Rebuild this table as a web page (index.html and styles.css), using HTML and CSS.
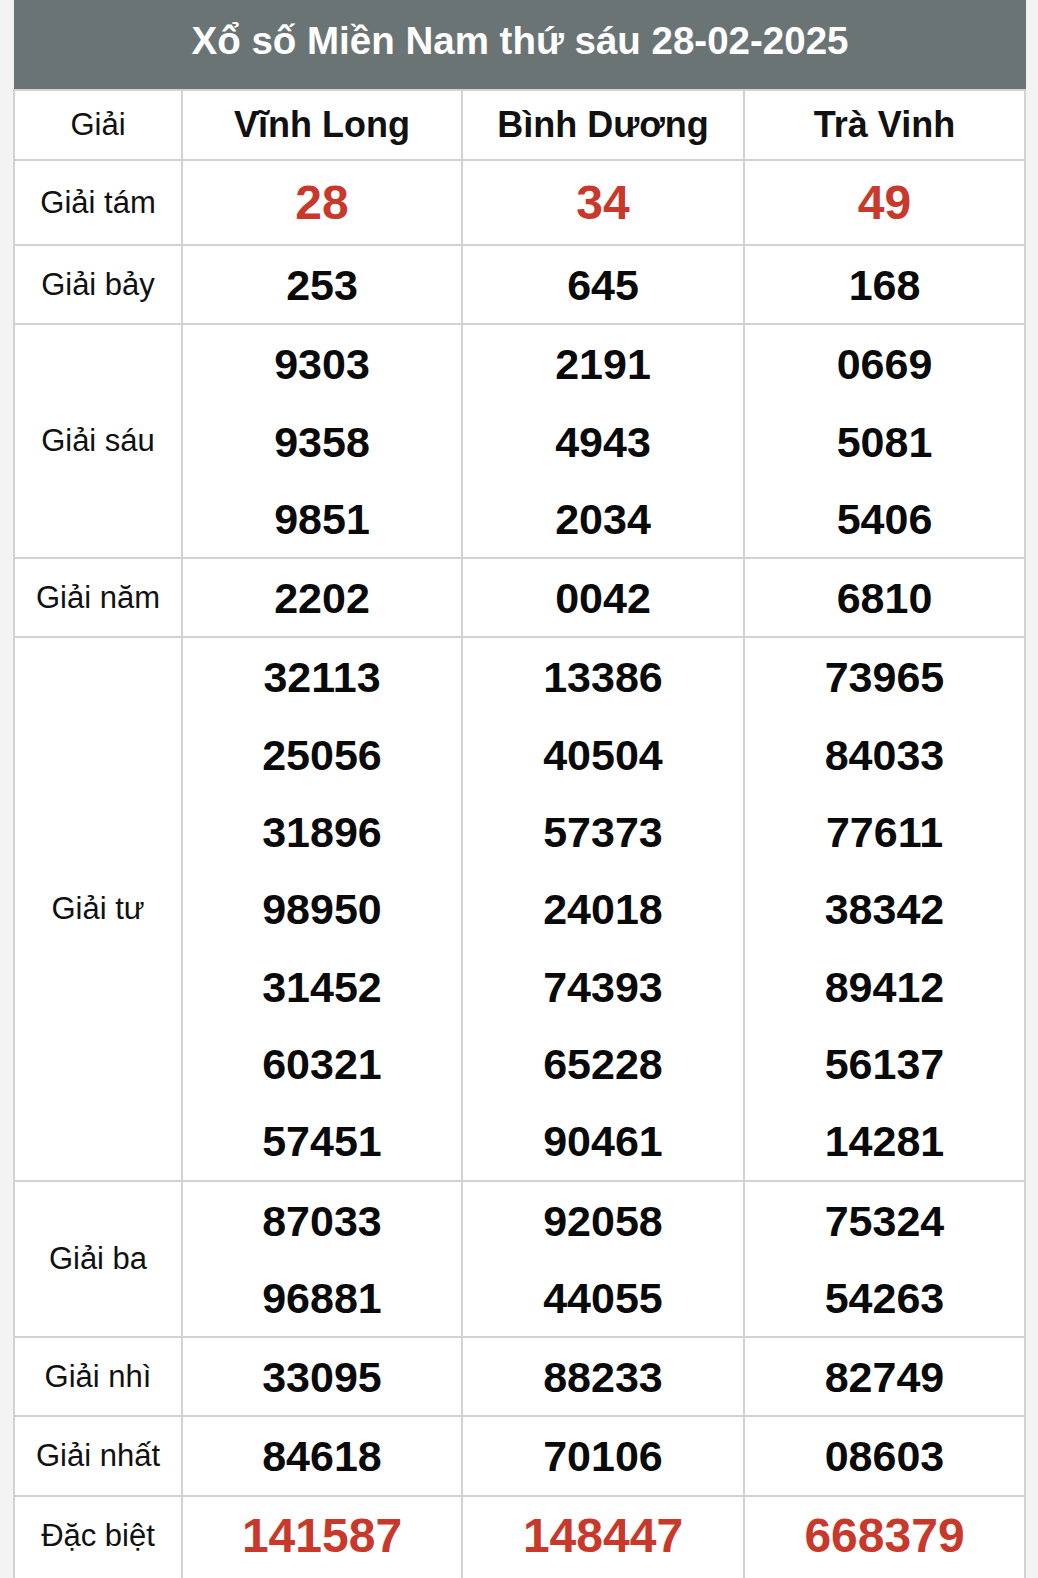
FILE: index.html
```html
<!DOCTYPE html>
<html lang="vi">
<head>
<meta charset="utf-8">
<title>Xổ số Miền Nam thứ sáu 28-02-2025</title>
<link rel="stylesheet" href="styles.css">
</head>
<body>
<div class="wrap">
  <div class="title">Xổ số Miền Nam thứ sáu 28-02-2025</div>
  <div class="grid">
    <div class="cell hd-row label">Giải</div>
    <div class="cell hd-row prov">Vĩnh Long</div>
    <div class="cell hd-row prov">Bình Dương</div>
    <div class="cell hd-row prov">Trà Vinh</div>

    <div class="cell tam label">Giải tám</div>
    <div class="cell tam"><span class="num red big">28</span></div>
    <div class="cell tam"><span class="num red big">34</span></div>
    <div class="cell tam"><span class="num red big">49</span></div>

    <div class="cell label">Giải bảy</div>
    <div class="cell"><span class="num">253</span></div>
    <div class="cell"><span class="num">645</span></div>
    <div class="cell"><span class="num">168</span></div>

    <div class="cell label">Giải sáu</div>
    <div class="cell"><span class="num">9303</span><span class="num">9358</span><span class="num">9851</span></div>
    <div class="cell"><span class="num">2191</span><span class="num">4943</span><span class="num">2034</span></div>
    <div class="cell"><span class="num">0669</span><span class="num">5081</span><span class="num">5406</span></div>

    <div class="cell label">Giải năm</div>
    <div class="cell"><span class="num">2202</span></div>
    <div class="cell"><span class="num">0042</span></div>
    <div class="cell"><span class="num">6810</span></div>

    <div class="cell label">Giải tư</div>
    <div class="cell"><span class="num">32113</span><span class="num">25056</span><span class="num">31896</span><span class="num">98950</span><span class="num">31452</span><span class="num">60321</span><span class="num">57451</span></div>
    <div class="cell"><span class="num">13386</span><span class="num">40504</span><span class="num">57373</span><span class="num">24018</span><span class="num">74393</span><span class="num">65228</span><span class="num">90461</span></div>
    <div class="cell"><span class="num">73965</span><span class="num">84033</span><span class="num">77611</span><span class="num">38342</span><span class="num">89412</span><span class="num">56137</span><span class="num">14281</span></div>

    <div class="cell label">Giải ba</div>
    <div class="cell"><span class="num">87033</span><span class="num">96881</span></div>
    <div class="cell"><span class="num">92058</span><span class="num">44055</span></div>
    <div class="cell"><span class="num">75324</span><span class="num">54263</span></div>

    <div class="cell label">Giải nhì</div>
    <div class="cell"><span class="num">33095</span></div>
    <div class="cell"><span class="num">88233</span></div>
    <div class="cell"><span class="num">82749</span></div>

    <div class="cell label">Giải nhất</div>
    <div class="cell"><span class="num">84618</span></div>
    <div class="cell"><span class="num">70106</span></div>
    <div class="cell"><span class="num">08603</span></div>

    <div class="cell db label"><span class="db-label">Đặc biệt</span></div>
    <div class="cell db"><span class="num red huge">141587</span></div>
    <div class="cell db"><span class="num red huge">148447</span></div>
    <div class="cell db"><span class="num red huge">668379</span></div>
  </div>
</div>
</body>
</html>
```

FILE: styles.css
```css
html, body {
  margin: 0;
  padding: 0;
  background: #f3f3f3;
}

body {
  font-family: "Liberation Sans", Arial, sans-serif;
  color: #111;
}

.wrap {
  margin-left: 13px;
  width: 1013px;
}

.title {
  height: 89px;
  background: #6b7475;
  color: #fff;
  font-weight: bold;
  font-size: 38.5px;
  display: flex;
  align-items: center;
  justify-content: center;
  padding-bottom: 8px;
  box-sizing: border-box;
  margin-left: 1px;
}

.grid {
  display: grid;
  grid-template-columns: 166px 278px 280px 279px;
  gap: 2px;
  padding: 2px 2px 0 2px;
  background: #d2d2d2;
}

.cell {
  background: #fff;
  display: flex;
  flex-direction: column;
  align-items: center;
  justify-content: center;
}

.hd-row {
  height: 68px;
}

.tam {
  height: 83px;
}

.db {
  min-height: 90px;
  justify-content: flex-start;
}

.label {
  font-size: 31px;
  font-weight: normal;
  color: #111;
}

.db-label {
  display: block;
  height: 77.3px;
  line-height: 77.3px;
}

.prov {
  font-size: 36px;
  font-weight: bold;
  color: #111;
}

.num {
  display: block;
  height: 77.3px;
  line-height: 78.5px;
  font-size: 43px;
  font-weight: bold;
  color: #0a0a0a;
  text-align: center;
}

.red {
  color: #c8392c;
}

.big {
  font-size: 48px;
  height: 83px;
  line-height: 83px;
}

.huge {
  font-size: 48px;
}
```
